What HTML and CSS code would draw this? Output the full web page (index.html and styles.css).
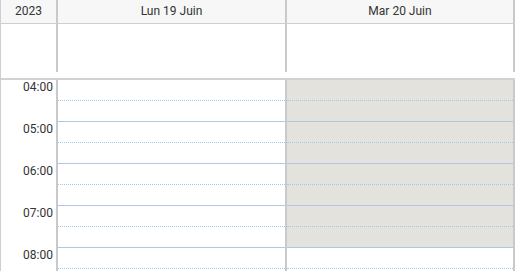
FILE: index.html
```html
<!DOCTYPE html>
<html lang="fr">
<head>
    <meta charset="UTF-8">
    <title>Agenda</title>
    <link rel="stylesheet" href="styles.css">
</head>
<body>
<div class="cal">
    <div class="cal-head">
        <div class="cell year">2023</div>
        <div class="cell day">Lun 19 Juin</div>
        <div class="cell day last">Mar 20 Juin</div>
    </div>
    <div class="cal-allday">
        <div class="cell"></div>
        <div class="cell"></div>
        <div class="cell last"></div>
    </div>
    <div class="cal-gap"></div>
    <div class="cal-body">
        <div class="times">
            <div class="hour">04:00</div>
            <div class="hour">05:00</div>
            <div class="hour">06:00</div>
            <div class="hour">07:00</div>
            <div class="hour">08:00</div>
        </div>
        <div class="col">
            <div class="slot half"></div><div class="slot"></div>
            <div class="slot half"></div><div class="slot"></div>
            <div class="slot half"></div><div class="slot"></div>
            <div class="slot half"></div><div class="slot"></div>
            <div class="slot half"></div><div class="slot"></div>
        </div>
        <div class="col last">
            <div class="slot half off"></div><div class="slot off"></div>
            <div class="slot half off"></div><div class="slot off"></div>
            <div class="slot half off"></div><div class="slot off"></div>
            <div class="slot half off"></div><div class="slot off"></div>
            <div class="slot half"></div><div class="slot"></div>
        </div>
    </div>
</div>
</body>
</html>
```

FILE: styles.css
```css
*{margin: 0;padding: 0;box-sizing: border-box;}
html,body{height: 100%;overflow: hidden;background: #fff;}
body{font-family: Roboto, "Liberation Sans", Arial, sans-serif;font-size: 12px;color: #333;}
.cal{
    width: 515px;
    border-left: 1px solid #cfcfcf;
}
.cal-head,.cal-allday,.cal-body{
    display: grid;
    grid-template-columns: 57px 229px 228px;
}
.cal-head{
    height: 24px;
    background: #f7f7f7;
    border-bottom: 1px solid #cfcfcf;
}
.cell{
    border-right: 2px solid #c9c9c9;
}
.cal-head .cell{
    text-align: center;
    line-height: 23px;
}
.cal-allday{
    height: 48px;
}
.cal-gap{
    height: 8px;
    border-bottom: 2px solid #d2d2d2;
}
.times{
    border-right: 2px solid #c9c9c9;
}
.hour{
    height: 42px;
    text-align: right;
    padding: 0 3px 0 0;
    line-height: 14px;
}
.col{
    border-right: 2px solid #c9c9c9;
}
.slot{
    height: 21px;
    border-bottom: 1px solid #a9cbe9;
}
.slot.half{
    border-bottom: 1px dotted #9dc9ef;
}
.slot.off{
    background: #e3e2dc;
}
```
